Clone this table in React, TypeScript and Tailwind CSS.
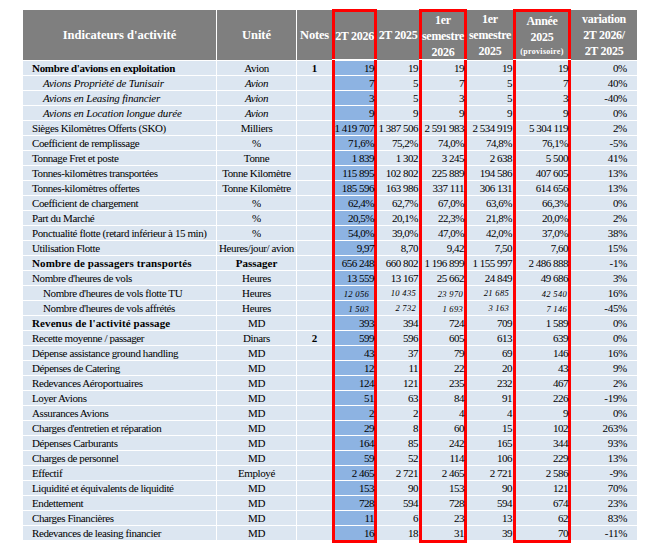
import React from "react";

type Row = {
  label: string;
  unit: string;
  note?: string;
  vals: string[];
  variation: string;
  kind?: "bold" | "boldWide" | "italic" | "sub";
  unitBold?: boolean;
};

const rows: Row[] = [
  { label: "Nombre d'avions en exploitation", unit: "Avion", note: "1", vals: ["19", "19", "19", "19", "19"], variation: "0%", kind: "bold" },
  { label: "Avions Propriété de Tunisair", unit: "Avion", vals: ["7", "5", "7", "5", "7"], variation: "40%", kind: "italic" },
  { label: "Avions en Leasing financier", unit: "Avion", vals: ["3", "5", "3", "5", "3"], variation: "-40%", kind: "italic" },
  { label: "Avions en Location longue durée", unit: "Avion", vals: ["9", "9", "9", "9", "9"], variation: "0%", kind: "italic" },
  { label: "Sièges Kilomètres Offerts (SKO)", unit: "Milliers", vals: ["1 419 707", "1 387 506", "2 591 983", "2 534 919", "5 304 119"], variation: "2%" },
  { label: "Coefficient de remplissage", unit: "%", vals: ["71,6%", "75,2%", "74,0%", "74,8%", "76,1%"], variation: "-5%" },
  { label: "Tonnage Fret et poste", unit: "Tonne", vals: ["1 839", "1 302", "3 245", "2 638", "5 500"], variation: "41%" },
  { label: "Tonnes-kilomètres transportées", unit: "Tonne Kilomètre", vals: ["115 895", "102 802", "225 889", "194 586", "407 605"], variation: "13%" },
  { label: "Tonnes-kilomètres offertes", unit: "Tonne Kilomètre", vals: ["185 596", "163 986", "337 111", "306 131", "614 656"], variation: "13%" },
  { label: "Coefficient de chargement", unit: "%", vals: ["62,4%", "62,7%", "67,0%", "63,6%", "66,3%"], variation: "0%" },
  { label: "Part du Marché", unit: "%", vals: ["20,5%", "20,1%", "22,3%", "21,8%", "20,0%"], variation: "2%" },
  { label: "Ponctualité flotte (retard inférieur à 15 min)", unit: "%", vals: ["54,0%", "39,0%", "47,0%", "42,0%", "37,0%"], variation: "38%" },
  { label: "Utilisation Flotte", unit: "Heures/jour/ avion", vals: ["9,97", "8,70", "9,42", "7,50", "7,60"], variation: "15%" },
  { label: "Nombre de passagers transportés", unit: "Passager", unitBold: true, vals: ["656 248", "660 802", "1 196 899", "1 155 997", "2 486 888"], variation: "-1%", kind: "boldWide" },
  { label: "Nombre d'heures de vols", unit: "Heures", vals: ["13 559", "13 167", "25 662", "24 849", "49 686"], variation: "3%" },
  { label: "Nombre d'heures de vols flotte TU", unit: "Heures", vals: ["12 056", "10 435", "23 970", "21 685", "42 540"], variation: "16%", kind: "sub" },
  { label: "Nombre d'heures de vols affrétés", unit: "Heures", vals: ["1 503", "2 732", "1 693", "3 163", "7 146"], variation: "-45%", kind: "sub" },
  { label: "Revenus de l'activité passage", unit: "MD", vals: ["393", "394", "724", "709", "1 589"], variation: "0%", kind: "boldWide" },
  { label: "Recette moyenne  / passager", unit: "Dinars", note: "2", vals: ["599", "596", "605", "613", "639"], variation: "0%" },
  { label: "Dépense assistance ground handling", unit: "MD", vals: ["43", "37", "79", "69", "146"], variation: "16%" },
  { label: "Dépenses de Catering", unit: "MD", vals: ["12", "11", "22", "20", "43"], variation: "9%" },
  { label: "Redevances Aéroportuaires", unit: "MD", vals: ["124", "121", "235", "232", "467"], variation: "2%" },
  { label: "Loyer Avions", unit: "MD", vals: ["51", "63", "84", "91", "226"], variation: "-19%" },
  { label: "Assurances Avions", unit: "MD", vals: ["2", "2", "4", "4", "9"], variation: "0%" },
  { label: "Charges d'entretien et réparation", unit: "MD", vals: ["29", "8", "60", "15", "102"], variation: "263%" },
  { label: "Dépenses Carburants", unit: "MD", vals: ["164", "85", "242", "165", "344"], variation: "93%" },
  { label: "Charges de personnel", unit: "MD", vals: ["59", "52", "114", "106", "229"], variation: "13%" },
  { label: "Effectif", unit: "Employé", vals: ["2 465", "2 721", "2 465", "2 721", "2 586"], variation: "-9%" },
  { label: "Liquidité et équivalents de liquidité", unit: "MD", vals: ["153", "90", "153", "90", "121"], variation: "70%" },
  { label: "Endettement", unit: "MD", vals: ["728", "594", "728", "594", "674"], variation: "23%" },
  { label: "Charges Financières", unit: "MD", vals: ["11", "6", "23", "13", "62"], variation: "83%" },
  { label: "Redevances de leasing financier", unit: "MD", vals: ["16", "18", "31", "39", "70"], variation: "-11%" },
];

const GRID = "grid grid-cols-[194px_80px_35px_45px_42px_48px_46px_58px_66px] items-start";

function RedCell({
  children,
  last,
  highlight,
  header,
}: {
  children: React.ReactNode;
  last?: boolean;
  highlight?: boolean;
  header?: boolean;
}) {
  return (
    <div
      className={
        "border-x-[3px] border-[#ff0000] " +
        (header ? "border-t-[3px] " : "") +
        (last ? "border-b-[3px] " : "")
      }
    >
      {header ? (
        <div className="h-[47px] bg-[#7f7f7f] flex flex-col items-center justify-center text-white font-bold text-[12px] leading-4 tracking-[-0.3px] text-center">
          {children}
        </div>
      ) : (
        <div
          className={
            "h-[15px] border-t border-white flex items-center justify-end " +
            (highlight ? "bg-[#8db3e2]" : "bg-[#dce6f1]")
          }
        >
          {children}
        </div>
      )}
    </div>
  );
}

function Val({ v, sub, pr }: { v: string; sub?: boolean; pr?: string }) {
  if (sub) {
    return (
      <span className={"italic text-[8.5px] tracking-[0.3px] whitespace-nowrap " + (pr ?? "pr-[2px]")}>{v}</span>
    );
  }
  return <span className="whitespace-nowrap">{v}</span>;
}

function HeaderCell({ children, divider }: { children: React.ReactNode; divider?: boolean }) {
  return (
    <div
      className={
        "h-[50px] mt-[1px] bg-[#7f7f7f] flex flex-col items-center justify-center text-white font-bold text-[12px] leading-4 tracking-[-0.3px] text-center " +
        (divider ? "border-r border-white" : "")
      }
    >
      {children}
    </div>
  );
}

export default function App() {
  return (
    <div className="w-[654px] h-[548px] bg-white overflow-hidden font-['Liberation_Serif',serif] text-black">
      <div className="ml-[23px] mt-[9px] w-[614px]">
        {/* Header */}
        <div className={GRID}>
          <HeaderCell divider>
            <span className="text-[12.5px] tracking-[0px]">Indicateurs d'activité</span>
          </HeaderCell>
          <HeaderCell divider>
            <span className="text-[12.5px] tracking-[0px]">Unité</span>
          </HeaderCell>
          <HeaderCell>
            <span className="text-[12.5px] tracking-[-0.2px]">Notes</span>
          </HeaderCell>
          <RedCell header>
            <span className="whitespace-nowrap">2T 2026</span>
          </RedCell>
          <HeaderCell>
            <span className="whitespace-nowrap">2T 2025</span>
          </HeaderCell>
          <RedCell header>
            <span>1er</span>
            <span>semestre</span>
            <span>2026</span>
          </RedCell>
          <HeaderCell>
            <span>1er</span>
            <span>semestre</span>
            <span>2025</span>
          </HeaderCell>
          <RedCell header>
            <span>Année</span>
            <span>2025</span>
            <span className="text-[8px] tracking-[0.3px] leading-[14px]">(provisoire)</span>
          </RedCell>
          <HeaderCell>
            <span>variation</span>
            <span>2T 2026/</span>
            <span>2T 2025</span>
          </HeaderCell>
        </div>

        {/* Body */}
        {rows.map((r, i) => {
          const last = i === rows.length - 1;
          const sub = r.kind === "sub";
          let labelCls = "pl-[9px] tracking-[-0.4px]";
          if (r.kind === "bold") labelCls = "pl-[9px] font-bold tracking-[-0.3px]";
          if (r.kind === "boldWide") labelCls = "pl-[9px] font-bold tracking-[0.1px]";
          if (r.kind === "italic") labelCls = "pl-[20px] italic tracking-[-0.2px]";
          if (r.kind === "sub") labelCls = "pl-[20px] tracking-[-0.4px]";
          return (
            <div key={i} className={GRID + " text-[11px] leading-none"}>
              <div
                className={
                  "h-[15px] border-t border-r border-white bg-[#dce6f1] flex items-center whitespace-nowrap overflow-visible " +
                  labelCls
                }
              >
                {r.label}
              </div>
              <div
                className={
                  "h-[15px] border-t border-r border-white bg-[#dce6f1] flex items-center justify-center whitespace-nowrap tracking-[-0.4px] " +
                  (r.kind === "italic" ? "italic " : "") +
                  (r.unitBold ? "font-bold tracking-[0px]" : "")
                }
              >
                {r.unit}
              </div>
              <div className="h-[15px] border-t border-white bg-[#dce6f1] flex items-center justify-center font-bold">
                {r.note ?? ""}
              </div>
              <RedCell last={last} highlight>
                <span className="tracking-[-0.5px]">
                  <Val v={r.vals[0]} sub={sub} pr="pr-[5px]" />
                </span>
              </RedCell>
              <div className="h-[15px] border-t border-white bg-[#dce6f1] flex items-center justify-end tracking-[-0.5px] pr-[1px]">
                <Val v={r.vals[1]} sub={sub} />
              </div>
              <RedCell last={last}>
                <span className="tracking-[-0.5px]">
                  <Val v={r.vals[2]} sub={sub} pr="pr-[1px]" />
                </span>
              </RedCell>
              <div className="h-[15px] border-t border-white bg-[#dce6f1] flex items-center justify-end tracking-[-0.5px] pr-[1px]">
                <Val v={r.vals[3]} sub={sub} pr="pr-[3px]" />
              </div>
              <RedCell last={last}>
                <span className="tracking-[-0.5px]">
                  <Val v={r.vals[4]} sub={sub} pr="pr-[1px]" />
                </span>
              </RedCell>
              <div className="h-[15px] border-t border-white bg-[#dce6f1] flex items-center justify-end pr-[10px] tracking-[-0.3px]">
                {r.variation}
              </div>
            </div>
          );
        })}
      </div>
    </div>
  );
}
